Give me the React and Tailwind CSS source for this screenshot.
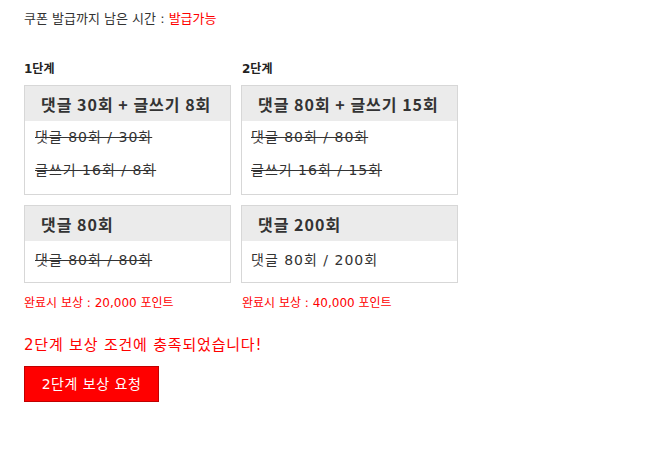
export default function App() {
  const ff = { fontFamily: '"DejaVu Sans", "Noto Sans CJK KR", sans-serif' };
  const hf = { fontFamily: '"Noto Sans CJK KR", sans-serif' };
  return (
    <div className="w-[651px] h-[461px] bg-white text-[#333]" style={ff}>
      <div className="pl-[24px] pt-[9px]">
        <p className="text-[13px] leading-[20px] h-[20px]">
          쿠폰 발급까지 남은 시간 : <span className="text-[#ff0000]">발급가능</span>
        </p>
        <div className="flex gap-[10px] mt-[30px]">
          <div className="w-[207px] flex flex-col">
            <p className="text-[12px] font-bold leading-[20px] h-[20px] text-[#222]">1단계</p>
            <div className="mt-[6px] border border-[#d7d7d7]">
              <div className="h-[35px] bg-[#ebebeb] pl-[16px] flex items-center text-[16px] font-bold tracking-[1px] text-[#333]" style={hf}>
                댓글 30회 + 글쓰기 8회
              </div>
              <div className="pl-[10px] pt-[5px] pb-[13px] text-[14px] tracking-[1px] flex flex-col gap-[11px]">
                <p className="h-[22px] leading-[22px] line-through">댓글 80회 / 30회</p>
                <p className="h-[22px] leading-[22px] line-through">글쓰기 16회 / 8회</p>
              </div>
            </div>
            <div className="mt-[10px] border border-[#d7d7d7]">
              <div className="h-[35px] bg-[#ebebeb] pl-[16px] flex items-center text-[16px] font-bold tracking-[1px] text-[#333]" style={hf}>
                댓글 80회
              </div>
              <div className="pl-[10px] pt-[8px] pb-[11px] text-[14px] tracking-[1px]">
                <p className="h-[22px] leading-[22px] line-through">댓글 80회 / 80회</p>
              </div>
            </div>
            <p className="mt-[11px] text-[12px] leading-[18px] text-[#ff0000]">완료시 보상 : 20,000 포인트</p>
          </div>
          <div className="w-[217px] flex flex-col">
            <p className="text-[12px] font-bold leading-[20px] h-[20px] pl-[1px] text-[#222]">2단계</p>
            <div className="mt-[6px] border border-[#d7d7d7]">
              <div className="h-[35px] bg-[#ebebeb] pl-[16px] flex items-center text-[16px] font-bold tracking-[1px] text-[#333]" style={hf}>
                댓글 80회 + 글쓰기 15회
              </div>
              <div className="pl-[9px] pt-[5px] pb-[13px] text-[14px] tracking-[1px] flex flex-col gap-[11px]">
                <p className="h-[22px] leading-[22px] line-through">댓글 80회 / 80회</p>
                <p className="h-[22px] leading-[22px] line-through">글쓰기 16회 / 15회</p>
              </div>
            </div>
            <div className="mt-[10px] border border-[#d7d7d7]">
              <div className="h-[35px] bg-[#ebebeb] pl-[16px] flex items-center text-[16px] font-bold tracking-[1px] text-[#333]" style={hf}>
                댓글 200회
              </div>
              <div className="pl-[9px] pt-[8px] pb-[11px] text-[14px] tracking-[1px]">
                <p className="h-[22px] leading-[22px]">댓글 80회 / 200회</p>
              </div>
            </div>
            <p className="mt-[11px] pl-[1px] text-[12px] leading-[18px] text-[#ff0000]">완료시 보상 : 40,000 포인트</p>
          </div>
        </div>
        <p className="mt-[23px] text-[15px] leading-[20px] tracking-[0.8px] text-[#ff0000]">2단계 보상 조건에 충족되었습니다!</p>
        <button className="mt-[11px] w-[135px] h-[36px] bg-[#ff0000] border border-[#c00000] text-white text-[14px] tracking-[0.5px] flex items-center justify-center">
          2단계 보상 요청
        </button>
      </div>
    </div>
  );
}
